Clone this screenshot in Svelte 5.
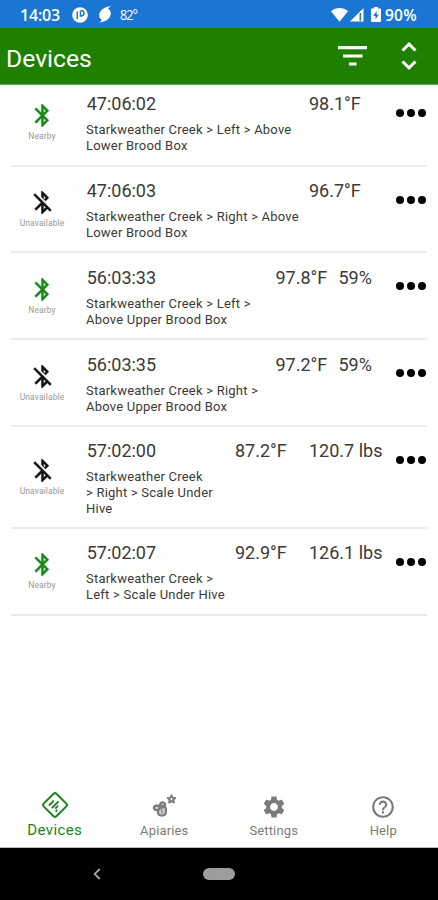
<script>
  const devices = [
    { id: '47:06:02', near: true, temp: '98.1°F', extra: '', kind: 'single', path: ['Starkweather Creek > Left > Above', 'Lower Brood Box'] },
    { id: '47:06:03', near: false, temp: '96.7°F', extra: '', kind: 'single', path: ['Starkweather Creek > Right > Above', 'Lower Brood Box'] },
    { id: '56:03:33', near: true, temp: '97.8°F', extra: '59%', kind: 'humid', path: ['Starkweather Creek > Left >', 'Above Upper Brood Box'] },
    { id: '56:03:35', near: false, temp: '97.2°F', extra: '59%', kind: 'humid', path: ['Starkweather Creek > Right >', 'Above Upper Brood Box'] },
    { id: '57:02:00', near: false, temp: '87.2°F', extra: '120.7 lbs', kind: 'scale', path: ['Starkweather Creek', '> Right > Scale Under', 'Hive'] },
    { id: '57:02:07', near: true, temp: '92.9°F', extra: '126.1 lbs', kind: 'scale', path: ['Starkweather Creek >', 'Left > Scale Under Hive'] }
  ];
  const bt = 'M17.71 7.71L12 2h-1v7.59L6.41 5 5 6.41 10.59 12 5 17.59 6.41 19 11 14.41V22h1l5.71-5.71-4.3-4.29 4.3-4.29zM13 5.83l1.88 1.88L13 9.59V5.83zm1.88 10.46L13 18.17v-3.76l1.88 1.88z';
  const btOff = 'M13 5.83l1.88 1.88-1.6 1.6 1.41 1.41 3.02-3.02L12 2h-1v5.03l2 2v-3.2zM5.41 4L4 5.41 10.59 12 5 17.59 6.41 19 11 14.41V22h1l4.29-4.29 2.3 2.29L20 18.59 5.41 4zM13 18.17v-3.76l1.88 1.88L13 18.17z';
</script>

<div class="screen">
  <div class="status">
    <span class="clock">14:03</span>
    <svg class="badge" width="16" height="16" viewBox="0 0 16 16">
      <circle cx="8" cy="8" r="7.8" fill="#fff" />
      <path d="M5.300 12V4.500M8.500 3.500v5.500h.8a2.700 2.700 0 0 0 0-5.400" fill="none" stroke="#1976d2" stroke-width="1.500" />
    </svg>
    <svg class="storm" width="14" height="17" viewBox="0 0 14 17">
      <path d="M13.600.5C11.700.9 10.600 1.700 10.200 2.800c2.800 1.700 3.300 5.500 1.600 8.300C9.700 14.600 5.300 16.500.4 16.500c1.900-.6 3-1.400 3.500-2.500C1.100 12.500.5 8.700 2.200 5.800 4.300 2.300 8.600.3 13.600.5z" fill="#fff" />
    </svg>
    <span class="degrees">82°</span>
    <span class="grow"></span>
    <svg class="wifi" width="17" height="14" viewBox="0 0 17 14"><path d="M0 3.300C5-1 12-1 17 3.300L8.500 13.800z" fill="#fff" /></svg>
    <svg class="signal" width="14" height="14" viewBox="0 0 14 14">
      <path d="M0 13.500L13.500 0v13.500z" fill="#fff" />
      <path d="M10.300 5v7.700" stroke="#1976d2" stroke-width="1.500" />
    </svg>
    <svg class="battery" width="10" height="15" viewBox="0 0 10 15">
      <path d="M3 0h4v1.500h2c.6 0 1 .4 1 1V14c0 .6-.4 1-1 1H1c-.6 0-1-.4-1-1V2.500c0-.6.4-1 1-1h2z" fill="#fff" />
      <path d="M5.600 4L2.300 9h2.200v3.500L7.800 7.600H5.600z" fill="#1976d2" />
    </svg>
    <span class="percent">90%</span>
  </div>

  <header>
    <h1>Devices</h1>
    <svg class="filter" width="30" height="20" viewBox="0 0 30 20"><path d="M0 1.700h29M5 10h19.500M11 18h7.500" stroke="#fff" stroke-width="3.200" fill="none" /></svg>
    <svg class="sort" width="16" height="28" viewBox="0 0 16 28"><path d="M1.500 8.500L8 2.200l6.500 6.300M1.500 19.500L8 25.800l6.500-6.300" stroke="#fff" stroke-width="3" fill="none" /></svg>
  </header>

  <main>
    {#each devices as d, i}
      <section class="row {d.kind}" class:first={i === 0} class:tall={d.path.length === 3}>
        <div class="link" class:near={d.near}>
          <svg width="27" height="27" viewBox="0 0 24 24"><path d={d.near ? bt : btOff} fill="currentColor" stroke="currentColor" stroke-width=".3" /></svg>
          <span>{d.near ? 'Nearby' : 'Unavailable'}</span>
        </div>
        <div class="info">
          <div class="top">
            <span class="id">{d.id}</span>
            <span class="temp">{d.temp}</span>
            {#if d.extra}<span class="extra">{d.extra}</span>{/if}
          </div>
          <div class="path">
            {#each d.path as line}<div>{line}</div>{/each}
          </div>
        </div>
        <svg class="more" width="32" height="10" viewBox="0 0 32 10"><circle cx="5" cy="5" r="4" /><circle cx="16" cy="5" r="4" /><circle cx="27" cy="5" r="4" /></svg>
      </section>
    {/each}
  </main>

  <nav>
    <div class="tab active">
      <svg width="28" height="28" viewBox="0 0 28 28" fill="none" stroke="currentColor">
        <rect x="5" y="5" width="18" height="18" rx="2" transform="rotate(45 14 14)" stroke-width="2" />
        <path d="M8 14.500l4.800-4.800M10.800 17.200l6.700-6.700M14.200 17.700l2.800-2.800M14.600 20.600l1.600-1.600" stroke-width="1.900" />
      </svg>
      <span>Devices</span>
    </div>
    <div class="tab">
      <svg width="28" height="28" viewBox="0 0 28 28" fill="none" stroke="currentColor" stroke-linejoin="round">
        <path d="M10 13.600H6.500C4.500 13.600 3.500 15 4 16.500c.6 1.500 2.500 2.200 5 1z" fill="#ccc" stroke-width="2.200" />
        <path d="M10 13.500c0-2.600 1.500-3.500 3.300-3s2.300 2 1.500 4z" fill="#ccc" stroke-width="2.200" />
        <path d="M9.500 16.500c-2.500 2.500-2 6 .3 6.700 2.600.8 5.500.2 6-2.200.3-2.200.6-4.500-.8-6.500z" fill="#ccc" stroke-width="2.200" />
        <path d="M11.500 17.500l.8 3.800" stroke-width="1.200" />
        <path d="M21.500 3.300l1.100 2.400 2.600.3-1.900 1.800.5 2.600-2.300-1.300-2.300 1.300.5-2.600-1.900-1.800 2.600-.3z" stroke-width="2" />
      </svg>
      <span>Apiaries</span>
    </div>
    <div class="tab">
      <svg width="26" height="26" viewBox="0 0 24 24" fill="currentColor"><path d="M19.140 12.940c.04-.3.060-.61.060-.94 0-.32-.02-.64-.07-.94l2.030-1.580c.18-.14.230-.41.120-.61l-1.920-3.320c-.12-.22-.37-.29-.59-.22l-2.390.96c-.5-.38-1.030-.7-1.620-.94l-.36-2.540c-.04-.24-.24-.41-.48-.41h-3.840c-.24 0-.43.17-.47.41l-.36 2.540c-.59.240-1.130.57-1.620.94l-2.390-.96c-.22-.08-.47 0-.59.22L2.740 8.870c-.12.210-.08.470.12.610l2.030 1.580c-.05.3-.09.63-.09.94s.02.640.07.940l-2.030 1.580c-.18.140-.23.410-.12.610l1.920 3.320c.12.220.37.290.59.220l2.390-.96c.5.380 1.030.7 1.620.940l.36 2.540c.05.240.24.410.48.410h3.840c.24 0 .44-.17.470-.41l.36-2.540c.59-.24 1.130-.56 1.620-.94l2.390.96c.22.080.47 0 .59-.22l1.920-3.320c.12-.22.070-.47-.12-.61l-2.010-1.580zM12 15.600c-1.980 0-3.600-1.620-3.600-3.600s1.620-3.600 3.600-3.600 3.600 1.620 3.600 3.600-1.620 3.600-3.600 3.600z" /></svg>
      <span>Settings</span>
    </div>
    <div class="tab">
      <svg width="26" height="26" viewBox="0 0 24 24" fill="currentColor"><path d="M11 18h2v-2h-2v2zm1-16C6.480 2 2 6.480 2 12s4.480 10 10 10 10-4.480 10-10S17.520 2 12 2zm0 18c-4.410 0-8-3.590-8-8s3.590-8 8-8 8 3.590 8 8-3.590 8-8 8zm0-14c-2.210 0-4 1.790-4 4h2c0-1.100.9-2 2-2s2 .9 2 2c0 2-3 1.750-3 5h2c0-2.250 3-2.500 3-5 0-2.210-1.790-4-4-4z" /></svg>
      <span>Help</span>
    </div>
  </nav>

  <footer>
    <svg width="8" height="12" viewBox="0 0 8 12"><path d="M6.800 1L1.600 6l5.200 5" fill="none" stroke="#a5a5a5" stroke-width="1.800" /></svg>
    <div class="pill"></div>
    <span class="spacer"></span>
  </footer>
</div>

<style>
  :global(body) { margin: 0; background: #fff; }
  .screen { width: 438px; height: 900px; display: flex; flex-direction: column; overflow: hidden; background: #fff; color: #3a3a3a; font-family: Roboto, "Liberation Sans", sans-serif; }
  svg { display: block; flex: none; }
  .status { height: 28px; flex: none; box-sizing: border-box; display: flex; align-items: center; padding: 1px 20px 0 20px; background: #1976d2; color: #fff; }
  .clock { width: 52px; font: 600 16px/20px "Open Sans", sans-serif; letter-spacing: -.2px; }
  .storm { margin-left: 10px; }
  .degrees { margin-left: 8px; font: 14px/20px "Open Sans", sans-serif; letter-spacing: -1px; transform: scaleX(.9); transform-origin: left; }
  .grow { flex: 1; }
  .signal { margin-left: 2px; }
  .battery { margin-left: 7px; }
  .percent { margin-left: 4px; width: 33px; font: 600 15.500px/20px "Open Sans", sans-serif; white-space: nowrap; letter-spacing: .2px; }
  header { height: 57px; flex: none; box-sizing: border-box; display: flex; align-items: center; padding: 0 21px 0 6px; background: #1f8000; border-bottom: 1px solid #54b54a; color: #fff; }
  h1 { flex: 1; margin: 5px 0 0; font-weight: 400; font-size: 24.700px; line-height: 30px; }
  .filter { margin-right: 33px; }
  main { flex: 1; padding: 0 11px; }
  .row { height: 86.800px; box-sizing: border-box; border-bottom: 2px solid #ebebeb; display: flex; align-items: flex-start; padding-top: 13.500px; }
  .row.first { height: 81.500px; padding-top: 8px; }
  .row.tall { height: 102px; }
  .link { width: 62px; display: flex; flex-direction: column; align-items: center; color: #111; padding-top: 9px; }
  .tall .link { padding-top: 16.500px; }
  .link.near { color: #168a16; }
  .link span { color: #999; font-size: 8.500px; letter-spacing: .1px; line-height: 12px; margin-top: 1px; }
  .info { width: 310px; margin-left: 13px; }
  .top { display: flex; font-size: 18px; line-height: 22px; white-space: nowrap; }
  .id { flex: 1; padding-left: .7px; }
  .temp { width: 74px; }
  .single .temp { width: 87px; }
  .humid .temp { width: 63px; }
  .humid .extra { width: 57.500px; }
  .scale .extra { width: 87px; }
  .path { margin-top: 7px; font-size: 13px; letter-spacing: .22px; line-height: 16px; white-space: nowrap; }
  .more { margin: 14.500px 0 0 -1px; fill: #000; }
  nav { height: 66px; flex: none; display: grid; grid-template-columns: repeat(4, 1fr); border-bottom: 1px solid #bbb; }
  .tab { display: flex; flex-direction: column; align-items: center; justify-content: flex-end; color: #7b7b7b; font-size: 13px; letter-spacing: .15px; line-height: 16px; padding-bottom: 8px; }
  .tab span { margin-top: 3px; }
  .tab.active { color: #1b841b; font-size: 15px; letter-spacing: .4px; padding-bottom: 9px; }
  .tab.active span { margin-top: 3px; }
  footer { height: 52px; flex: none; background: #000; display: flex; align-items: center; justify-content: space-between; padding: 0 93px; }
  .pill { width: 32px; height: 12px; border-radius: 6px; background: #9d9d9d; }
  .spacer { width: 8px; }
</style>
